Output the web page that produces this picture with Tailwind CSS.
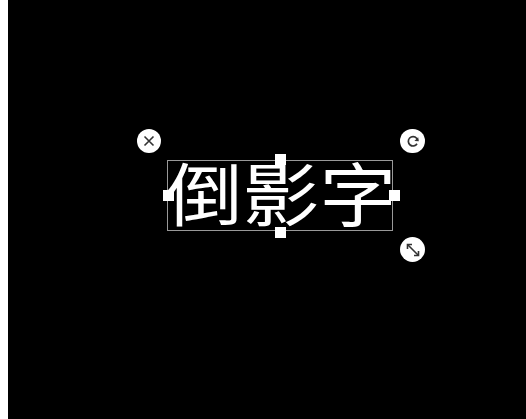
<!DOCTYPE html>
<html lang="zh">
<head>
<meta charset="utf-8">
<script src="https://cdn.jsdelivr.net/npm/@tailwindcss/browser@4"></script>
</head>
<body class="bg-white">
<div class="w-[526px] h-[419px] overflow-hidden flex bg-white">
  <div class="w-[8px] shrink-0 bg-white"></div>
  <div class="relative flex-1 bg-black">
    <div class="absolute inset-0 blur-[0.4px]">
    <div class="absolute left-[159px] top-[160px] w-[226px] h-[71px] border border-[#999] flex items-center justify-center">
      <span class="text-[75px] leading-none text-white whitespace-nowrap font-normal [font-family:'Noto_Sans_CJK_SC',sans-serif] translate-x-[0.5px] -translate-y-[4px] scale-x-[1.025] scale-y-[0.92]">倒影字</span>
      <div class="absolute left-[-5px] top-[29px] w-[11px] h-[11px] bg-white"></div>
      <div class="absolute right-[-8px] top-[29px] w-[11px] h-[11px] bg-white"></div>
      <div class="absolute left-[107px] top-[-7px] w-[11px] h-[11px] bg-white"></div>
      <div class="absolute left-[107px] bottom-[-8px] w-[11px] h-[11px] bg-white"></div>
    </div>
    <div class="absolute left-[129px] top-[129px] w-[24px] h-[24px] rounded-full bg-white flex items-center justify-center">
      <svg width="14" height="14" viewBox="0 0 14 14" fill="none" stroke="#333" stroke-width="1.6"><path d="M2.5 2.5 11.5 11.5M11.5 2.5 2.5 11.5"/></svg>
    </div>
    <div class="absolute left-[392px] top-[129px] w-[25px] h-[24px] rounded-full bg-white flex items-center justify-center">
      <svg width="14" height="14" viewBox="0 0 14 14" fill="none" stroke="#333" stroke-width="1.7"><path d="M11 9.8A4.7 4.7 0 1 1 10.6 4.2L11.6 6.4"/><path d="M8.4 6.9 12.8 7.2 12.2 3.2Z" stroke="none" fill="#333"/></svg>
    </div>
    <div class="absolute left-[392px] top-[237px] w-[25px] h-[25px] rounded-full bg-white flex items-center justify-center">
      <svg width="16" height="16" viewBox="0 0 16 16" fill="none" stroke="#333" stroke-width="1.6"><path d="M3 3 13 13"/><path d="M2.5 7V2.5H7M9 13.5H13.5V9"/></svg>
    </div>
    </div>
  </div>
</div>
</body>
</html>
